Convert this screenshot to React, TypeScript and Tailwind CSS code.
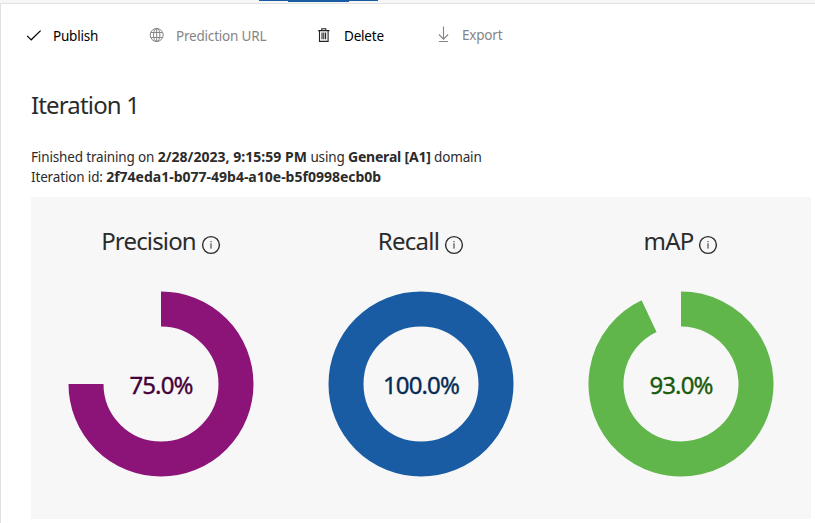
import React from "react";

const CheckIcon = () => (
  <svg width="16" height="16" viewBox="0 0 16 16" fill="none" stroke="#000" strokeWidth="1.2">
    <path d="M1.2 7.8 5.2 11.8 14.6 2.6" />
  </svg>
);

const GlobeIcon = () => (
  <svg width="16" height="16" viewBox="0 0 16 16" fill="none" stroke="#858585" strokeWidth="1">
    <circle cx="7.7" cy="7" r="6.5" />
    <ellipse cx="7.7" cy="7" rx="3.2" ry="6.5" />
    <path d="M7.7 .5V13.5M1.9 4.5H13.5M1.9 9.5H13.5" />
  </svg>
);

const TrashIcon = () => (
  <svg width="16" height="16" viewBox="0 0 16 16" fill="none" stroke="#222" strokeWidth="1.1">
    <path d="M2.2 2.6H13.4M5.8 2.5V.8H9.8V2.5M3.5 2.6V13.4H12.1V2.6M6 4.6V11.2M7.8 4.6V11.2M9.6 4.6V11.2" />
  </svg>
);

const DownloadIcon = () => (
  <svg width="16" height="18" viewBox="0 0 16 18" fill="none" stroke="#858585" strokeWidth="1.1">
    <path d="M8.5 .5V13M3.9 8.5 8.5 13.1 13.1 8.5M3.9 15.5H13.1" />
  </svg>
);

const InfoIcon = () => (
  <svg width="20" height="20" viewBox="0 0 20 20" fill="none" stroke="#2b2b2b">
    <circle cx="10" cy="10" r="8.4" strokeWidth="1.4" />
    <path d="M10 8.3V13.6M10 6V7.2" strokeWidth="1" />
  </svg>
);

type MetricProps = {
  title: string;
  titleClass: string;
  value: number;
  color: string;
  valueClass: string;
};

function Ring({ value, color }: { value: number; color: string }) {
  const angle = (value / 100) * 2 * Math.PI;
  const x = 93 + 75 * Math.sin(angle);
  const y = 93 - 75 * Math.cos(angle);
  return (
    <svg className="col-start-1 row-start-1" width="186" height="186" viewBox="0 0 186 186" fill="none" stroke={color} strokeWidth="35">
      {value >= 100 ? (
        <circle cx="93" cy="93" r="75" />
      ) : (
        <path d={`M93 18A75 75 0 ${value > 50 ? 1 : 0} 1 ${x} ${y}`} />
      )}
    </svg>
  );
}

function Metric({ title, titleClass, value, color, valueClass }: MetricProps) {
  return (
    <div className="flex w-[260px] flex-col items-center">
      <h2 className="mt-[28px] flex h-8 items-center gap-[5px] text-2xl leading-8 text-[#2b2b2b]">
        <span className={titleClass}>{title}</span>
        <span className="pt-[7px]">
          <InfoIcon />
        </span>
      </h2>
      <div className="mt-[34px] grid h-[186px] w-[186px] place-items-center">
        <Ring value={value} color={color} />
        <span
          className={`col-start-1 row-start-1 whitespace-nowrap pt-0.5 text-2xl leading-8 tracking-[-0.9px] [-webkit-text-stroke:0.35px] ${valueClass}`}
        >
          {value.toFixed(1)}%
        </span>
      </div>
    </div>
  );
}

export default function App() {
  return (
    <div className="flex h-[523px] w-[815px] flex-col overflow-hidden bg-white font-['Noto_Sans','Open_Sans',sans-serif] text-[#2b2b2b]">
      <div className="flex h-[3px] shrink-0 bg-[#f6f6f6] pl-[259px]">
        <div className="h-px w-[119px] bg-[#195ca3] pl-[29px]">
          <div className="h-[2px] w-[61px] bg-[#195ca3]" />
        </div>
      </div>
      <main className="flex flex-1 flex-col border-l border-t border-[#e1e1e1]">
        <nav className="flex h-[64px] shrink-0 items-center pl-[25px] text-[13.5px] tracking-[-0.2px]">
          <button className="flex w-[123px] items-center gap-[11px] text-black">
            <CheckIcon />
            <span>Publish</span>
          </button>
          <button className="flex w-[167px] items-center gap-[11px] text-[#858585]">
            <GlobeIcon />
            <span>Prediction URL</span>
          </button>
          <button className="flex w-[119px] items-center gap-[12px] text-black">
            <TrashIcon />
            <span>Delete</span>
          </button>
          <button className="flex items-center gap-[11px] pb-[2px] text-[#858585]">
            <DownloadIcon />
            <span>Export</span>
          </button>
        </nav>
        <section className="pl-[30px]">
          <h1 className="mt-[21px] text-2xl leading-8 tracking-[-0.85px]">Iteration 1</h1>
          <div className="mt-[26px] h-[50px] whitespace-nowrap text-[13.5px] leading-5 tracking-[-0.15px]">
            <p>
              Finished training on <b className="text-sm leading-5 tracking-[0.03px]">2/28/2023, 9:15:59 PM</b> using{" "}
              <b className="text-sm leading-5 tracking-[-0.2px]">General [A1]</b> domain
            </p>
            <p>
              Iteration id: <b className="text-sm leading-5 tracking-[0px]">2f74eda1-b077-49b4-a10e-b5f0998ecb0b</b>
            </p>
          </div>
          <div className="flex h-[322px] w-[780px] bg-[#f7f7f7]">
            <Metric title="Precision" titleClass="tracking-[-0.85px]" value={75} color="#8c1378" valueClass="text-[#430039]" />
            <Metric title="Recall" titleClass="tracking-[-0.7px]" value={100} color="#195ca3" valueClass="text-[#062b54]" />
            <Metric title="mAP" titleClass="tracking-[-0.8px]" value={93} color="#60b54b" valueClass="text-[#185a0b]" />
          </div>
        </section>
      </main>
    </div>
  );
}
